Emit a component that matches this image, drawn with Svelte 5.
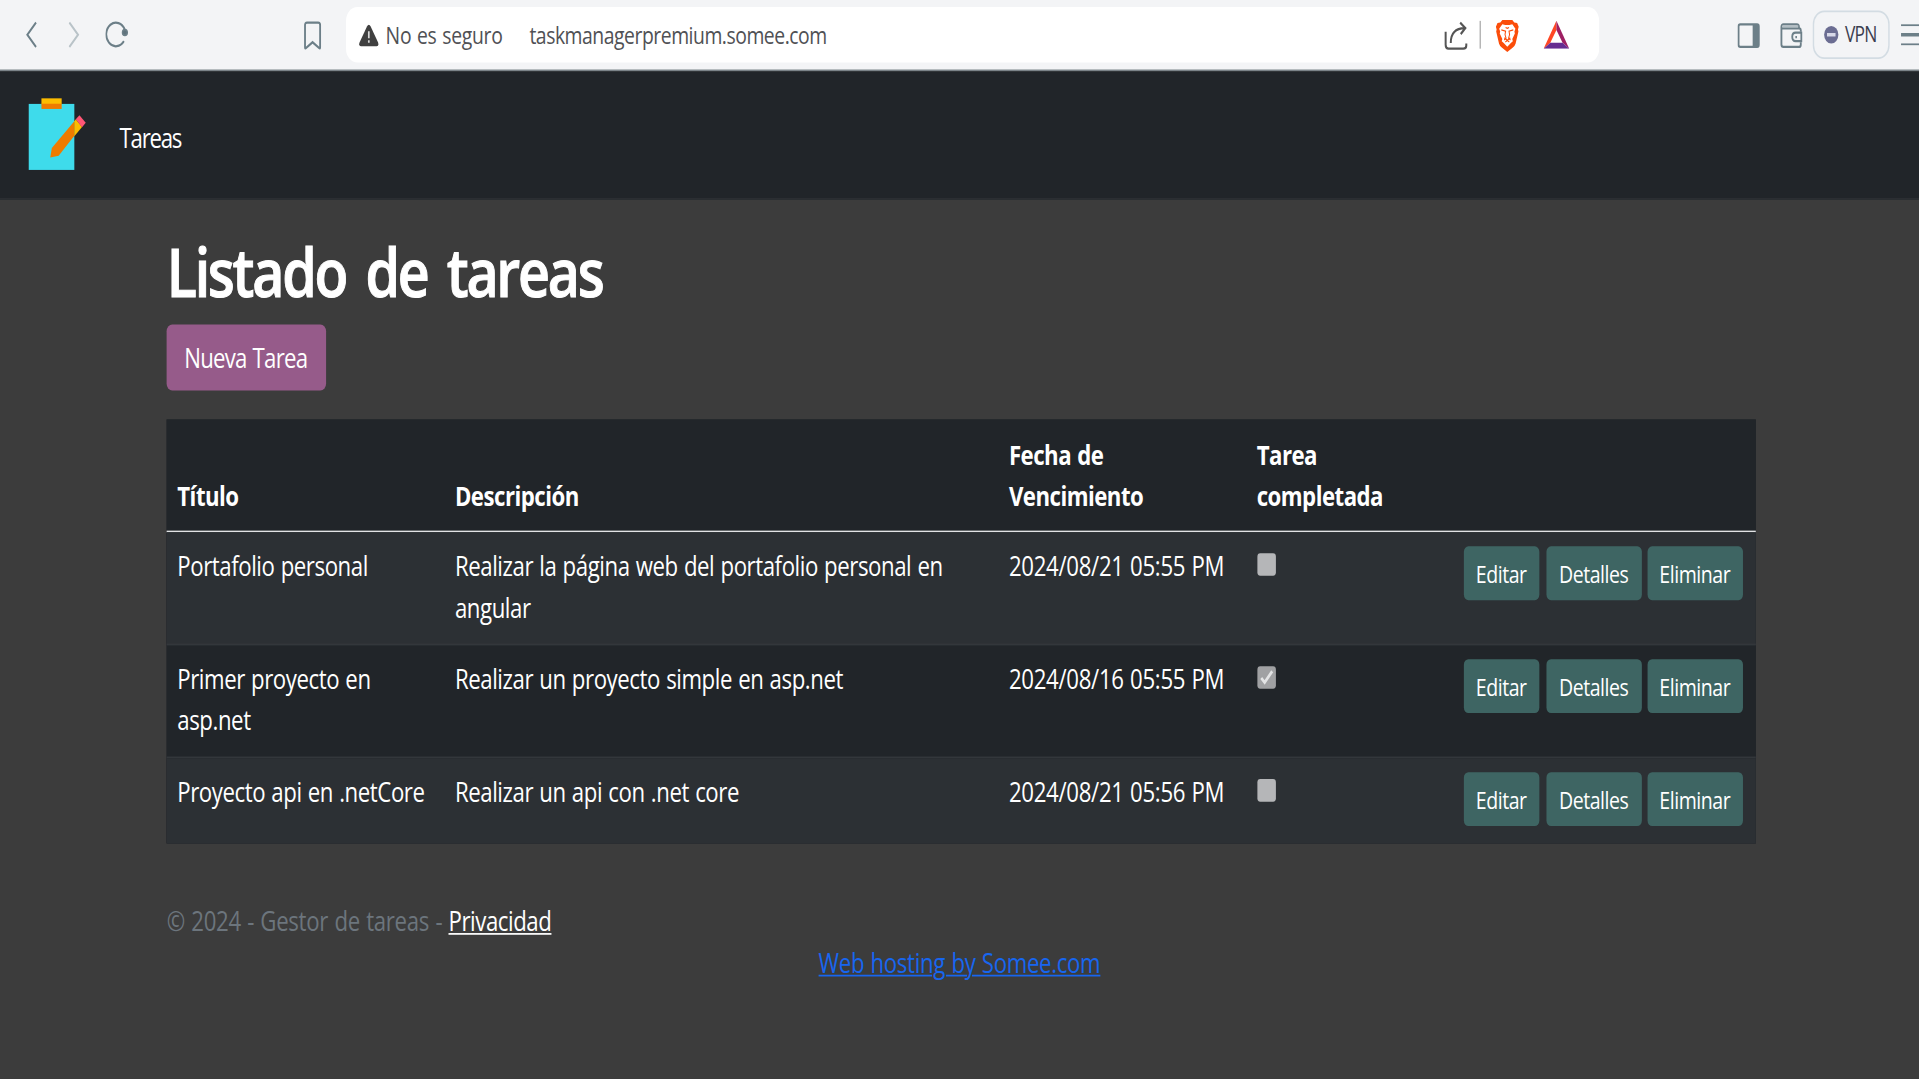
<script>
  const tasks = [
    {
      title: 'Portafolio personal',
      description: 'Realizar la página web del portafolio personal en angular',
      due: '2024/08/21 05:55 PM',
      done: false
    },
    {
      title: 'Primer proyecto en asp.net',
      description: 'Realizar un proyecto simple en asp.net',
      due: '2024/08/16 05:55 PM',
      done: true
    },
    {
      title: 'Proyecto api en .netCore',
      description: 'Realizar un api con .net core',
      due: '2024/08/21 05:56 PM',
      done: false
    }
  ];
</script>

<div class="screen">
  <header class="toolbar">
    <div class="nav-icons">
      <svg class="back" width="8" height="16" viewBox="0 0 8 16"><path d="M7.3 1 L1.2 8 L7.3 15" /></svg>
      <svg class="forward" width="8" height="16" viewBox="0 0 8 16"><path d="M.7 1 L6.8 8 L.7 15" /></svg>
      <svg class="reload" width="18" height="16" viewBox="0 0 18 16">
        <path d="M13 11.7 A6.8 6.8 0 1 1 13.6 5" />
        <circle cx="13.7" cy="6.7" r="1.7" />
      </svg>
      <svg class="bookmark" width="13" height="17" viewBox="0 0 13 17">
        <path d="M2.6 1 H10.4 Q11.8 1 11.8 2.4 V15.3 Q11.8 16.2 11 15.6 L6.5 12.3 L2 15.6 Q1.2 16.2 1.2 15.3 V2.4 Q1.2 1 2.6 1 Z" />
      </svg>
    </div>

    <div class="address">
      <svg class="warn" width="14" height="13" viewBox="0 0 14 13">
        <path d="M5.7 1.2 Q7 -.6 8.3 1.2 L13.6 10.6 Q14.2 12.4 12.5 12.6 H1.5 Q-.2 12.4 .4 10.6 Z" />
        <path class="mark" d="M7 4 V8 M7 9.2 V10.6" />
      </svg>
      <span class="secure">No es seguro</span>
      <span class="url">taskmanagerpremium.somee.com</span>
      <div class="address-icons">
        <svg class="share" width="17" height="17" viewBox="0 0 17 17">
          <path d="M1.2 6.3 V13.8 Q1.2 16 3.2 16 H13.6 Q15.7 16 15.7 14.2 V13" />
          <path d="M4.8 12.7 C4.8 7.5 7.8 4.3 14.6 4.2 M11.4 1 L15 4.2 L11.8 7.6" />
        </svg>
        <i class="divider"></i>
        <svg class="lion" width="17" height="19" viewBox="0 0 17 19">
          <path fill="#fb4d0a" d="M5 .5 H12 L13.4 2 L15.4 2.2 L16.5 4.4 L16 6 L16.3 7.2 L14.3 14.2 Q13.8 15.5 12.4 16.3 L8.5 18.9 L4.6 16.3 Q3.2 15.5 2.7 14.2 L.7 7.2 L1 6 L.5 4.4 L1.6 2.2 L3.6 2 Z" />
          <path fill="#fff" d="M5 3 L7 3.4 H10 L12 3 L14.2 5.5 L13.5 7.2 L13.8 8.3 L12 11.4 L12.4 12.8 L11 13.8 L8.5 15.9 L6 13.8 L4.6 12.8 L5 11.4 L3.2 8.3 L3.5 7.2 L2.8 5.5 Z" />
          <path fill="none" stroke="#fb4d0a" stroke-width=".7" d="M4.3 6.2 L7.3 6.9 L6.9 8.9 L7.6 10.9 L6.3 12 M12.7 6.2 L9.7 6.9 L10.1 8.9 L9.4 10.9 L10.7 12 M6.4 10.8 L8.5 12.2 L10.6 10.8 M7.1 13.2 L8.5 12.3 L9.9 13.2 M7.3 4.8 L8.5 5.3 L9.7 4.8" />
        </svg>
        <svg class="triangle" width="18" height="16" viewBox="0 0 18 16">
          <path fill="#ff4724" d="M9 0 L0 16 L4.7 12.6 L9 5.2 Z" />
          <path fill="#9e1f63" d="M9 0 L18 16 L13.3 12.6 L9 5.2 Z" />
          <path fill="#662d91" d="M0 16 H18 L13.3 12.6 H4.7 Z" />
        </svg>
      </div>
    </div>

    <div class="right-icons">
      <svg class="panel" width="16" height="15" viewBox="0 0 16 15">
        <rect x=".9" y="1" width="14.2" height="13" rx="1.2" />
        <rect class="solid" x="10.8" y="1" width="4.4" height="13" />
      </svg>
      <svg class="wallet" width="16" height="15" viewBox="0 0 16 15">
        <path d="M14.6 5.3 V4.2 Q14.6 3.4 13.6 3.4 H1 M1 2.4 V12.6 Q1 14 2.4 14 H13.3 Q14.6 14 14.6 12.7 V11.3 M1 2.6 Q1 1 2.5 1 H11.8 Q13.3 1 13.3 2.6 V3.4" />
        <path class="band" d="M1.6 2.2 H12.8" />
        <path d="M15 5.8 H11 Q8.6 5.8 8.6 8.2 Q8.6 10.7 11 10.7 H15 Z M10.8 8.3 H11.9" />
      </svg>
      <div class="vpn">
        <i class="vpn-dot"></i>
        <span>VPN</span>
      </div>
      <div class="menu"><i></i><i></i><i></i></div>
    </div>
  </header>

  <nav class="navbar">
    <svg class="logo" width="42" height="42" viewBox="0 0 42 42">
      <rect x="0" y="3.4" width="32.2" height="38" fill="#3edbeb" />
      <rect x="9.1" y=".2" width="14.2" height="3.4" fill="#fcbc00" />
      <rect x="9.1" y="3.3" width="14.2" height="3" fill="#ee7b00" />
      <path fill="#ee7b00" d="M32.2 13.4 L16.4 28.8 L15.3 34.3 L21.2 33.2 L32.2 21.8 Z" />
      <path fill="#fcbc00" d="M32.2 13.4 L33.2 12.3 L37.6 16.7 L32.2 22 Z" />
      <path fill="#ff5675" d="M33.2 12.3 L35.8 9.9 L40.2 14.3 L37.6 16.8 Z" />
    </svg>
    <a class="brand-link" href="#tareas">Tareas</a>
  </nav>

  <main class="container">
    <h1>Listado de tareas</h1>
    <button class="new-task">Nueva Tarea</button>

    <table>
      <thead>
        <tr>
          <th>Título</th>
          <th>Descripción</th>
          <th>Fecha de<br />Vencimiento</th>
          <th>Tarea<br />completada</th>
          <th></th>
        </tr>
      </thead>
      <tbody>
        {#each tasks as task}
          <tr>
            <td>{task.title}</td>
            <td>{task.description}</td>
            <td class="due">{task.due}</td>
            <td>
              <span class="check" class:done={task.done}>
                {#if task.done}
                  <svg width="13" height="13" viewBox="0 0 13 13"><path d="M2.7 6.8 L5.1 9.4 L10.4 3" /></svg>
                {/if}
              </span>
            </td>
            <td>
              <div class="actions">
                <button class="edit">Editar</button>
                <button class="details">Detalles</button>
                <button class="remove">Eliminar</button>
              </div>
            </td>
          </tr>
        {/each}
      </tbody>
    </table>
  </main>

  <footer>
    <div class="container copy">
      <span class="muted">© 2024 - Gestor de tareas -</span>
      <a href="#privacidad">Privacidad</a>
    </div>
    <div class="hosting"><a href="#hosting">Web hosting by Somee.com</a></div>
  </footer>
</div>

<style>
  :global(html),
  :global(body) {
    margin: 0;
    height: 100%;
    overflow: hidden;
    background: #3c3c3c;
  }

  /* Laid out at 1348 x 621 and stretched to fill the window. */
  .screen {
    display: flex;
    flex-direction: column;
    width: 1347.6px;
    height: 621.2px;
    overflow: hidden;
    transform: scale(1.424, 1.7375);
    transform-origin: 0 0;
    background: #3c3c3c;
    color: #fff;
    font: 15.6px/24px 'Open Sans', 'Noto Sans', sans-serif;
    letter-spacing: -0.3px;
    word-spacing: 0.6px;
  }

  .screen * {
    box-sizing: border-box;
  }

  a {
    color: inherit;
    text-decoration-thickness: 1px;
    text-underline-offset: 1.2px;
  }

  svg {
    display: block;
    flex: none;
  }

  /* Browser toolbar */
  .toolbar {
    display: flex;
    flex: none;
    align-items: center;
    height: 41px;
    background: #f3f4f6;
    border-bottom: 1px solid #7b8388;
  }

  .nav-icons {
    display: flex;
    flex: none;
    align-items: center;
    width: 243px;
    padding-left: 18px;
    fill: none;
    stroke: #6c7f88;
    stroke-width: 1.3;
  }

  .forward {
    margin-left: 22px;
    stroke: #b9c3c8;
  }

  .reload {
    margin-left: 17.8px;
  }

  .reload circle {
    fill: #5f737d;
    stroke-width: 1;
  }

  .bookmark {
    margin-left: 121.6px;
  }

  .address {
    display: flex;
    flex: none;
    align-items: center;
    width: 879.6px;
    height: 32.2px;
    padding-left: 9px;
    border-radius: 8px;
    background: #fff;
    color: #505155;
    font-size: 13.6px;
    line-height: 20px;
    white-space: nowrap;
  }

  .warn {
    fill: #404040;
  }

  .warn .mark {
    stroke: #d8d8d8;
    stroke-width: 1.2;
  }

  .secure,
  .url {
    transform: translateY(0.4px);
  }

  .secure {
    width: 101px;
    margin-left: 4.8px;
    letter-spacing: -0.18px;
  }

  .url {
    letter-spacing: -0.33px;
  }

  .address-icons {
    display: flex;
    align-items: center;
    margin-left: auto;
    padding-right: 20.9px;
  }

  .share {
    fill: none;
    stroke: #555;
    stroke-width: 1.4;
  }

  .divider {
    width: 1px;
    height: 16px;
    margin: 0 10.2px 0 8px;
    background: #b4b4b4;
  }

  .triangle {
    margin-left: 16.6px;
  }

  .right-icons {
    display: flex;
    flex: none;
    align-items: center;
    margin-left: 97px;
    fill: none;
    stroke: #6c7f88;
    stroke-width: 1.3;
  }

  .panel .solid {
    fill: #6c7f88;
    stroke: none;
  }

  .wallet {
    margin-left: 14.3px;
  }

  .wallet .band {
    stroke: #b4bfc5;
  }

  .vpn {
    display: flex;
    align-items: center;
    width: 54.2px;
    height: 28.6px;
    margin-left: 7.4px;
    padding-left: 7px;
    border: 1px solid #d3dce3;
    border-radius: 8px;
    color: #3b3e4f;
    font-size: 12.2px;
    line-height: 16px;
    letter-spacing: -0.5px;
  }

  .vpn span {
    padding-bottom: 1px;
  }

  .vpn-dot {
    display: flex;
    align-items: center;
    justify-content: center;
    width: 10px;
    height: 10px;
    margin-right: 4.3px;
    border-radius: 50%;
    background: #6b6d92;
  }

  .vpn-dot::after {
    content: '';
    width: 6px;
    height: 1.5px;
    background: #d8d9e8;
  }

  .menu {
    display: flex;
    flex-direction: column;
    gap: 4px;
    width: 16px;
    margin-left: 8px;
  }

  .menu i {
    height: 1.4px;
    background: #6c7f88;
  }

  /* Site header */
  .navbar {
    display: flex;
    flex: none;
    align-items: center;
    height: 74.2px;
    padding: 0 0 0.4px 19.7px;
    border-bottom: 0.6px solid #2d3033;
    background: #212529;
  }

  .logo {
    transform: translateY(0.4px);
  }

  .brand-link {
    margin-left: 22.3px;
    padding-top: 2.4px;
    letter-spacing: -0.88px;
    text-decoration: none;
  }

  /* Content */
  .container {
    width: 1116px;
    margin-left: 117.1px;
  }

  h1 {
    margin: 15.4px 0 8px;
    padding-top: 1.6px;
    height: 48px;
    font-size: 39px;
    font-weight: 600;
    line-height: 48px;
    letter-spacing: -1.6px;
    word-spacing: 5px;
    -webkit-text-stroke: 0.6px #fff;
  }

  button {
    display: flex;
    align-items: center;
    justify-content: center;
    padding: 0;
    border: 0;
    color: #fff;
    font: inherit;
    letter-spacing: inherit;
    word-spacing: inherit;
    white-space: nowrap;
  }

  .new-task {
    width: 111.8px;
    height: 38px;
    margin-bottom: 16px;
    padding-right: 0.8px;
    border-radius: 4px;
    background: #965b8a;
    letter-spacing: -0.52px;
    transform: translateY(-0.3px);
  }

  table,
  thead,
  tbody {
    display: block;
    background: #212529;
  }

  tr {
    display: grid;
    grid-template-columns: 195px 389px 174px 145px 213px;
    border-bottom: 1px solid #33373b;
  }

  thead tr {
    align-items: end;
    height: 65px;
    border-bottom-color: #e2e3e5;
  }

  table {
    transform: translateY(0.4px);
  }

  tbody tr {
    height: 65px;
  }

  tbody tr:last-child {
    height: 49.2px;
    border-bottom: 0;
  }

  tbody tr:nth-child(odd) {
    background: #2c3034;
  }

  th,
  td {
    padding: 7.6px 8px 8px 7.4px;
    text-align: left;
  }

  th {
    font-weight: 700;
    letter-spacing: -0.36px;
  }

  .due {
    padding-right: 0;
    letter-spacing: -0.21px;
    white-space: nowrap;
  }

  .check {
    display: block;
    width: 13px;
    height: 13px;
    margin: 4.6px 0 0 0.3px;
    border-radius: 2px;
    background: #b5b6b8;
  }

  .check.done {
    background: #a0a1a3;
  }

  .check path {
    fill: none;
    stroke: #e3e4e5;
    stroke-width: 1.8;
  }

  .actions {
    display: flex;
    height: 33px;
    padding-left: 0.3px;
  }

  .actions button {
    width: 67px;
    height: 31px;
    margin-top: 0.8px;
    padding-top: 0.6px;
    border-radius: 3.2px;
    background: #3e6563;
    font-size: 13.7px;
  }

  .actions .edit {
    width: 52.9px;
  }

  .actions .details {
    margin: 0.8px 4px 0 5px;
  }

  /* Footer */
  footer {
    margin-top: 33px;
  }

  .muted {
    color: #6c757d;
    letter-spacing: -0.21px;
  }

  .hosting {
    color: #1766f0;
    letter-spacing: -0.22px;
    text-align: center;
  }
</style>
